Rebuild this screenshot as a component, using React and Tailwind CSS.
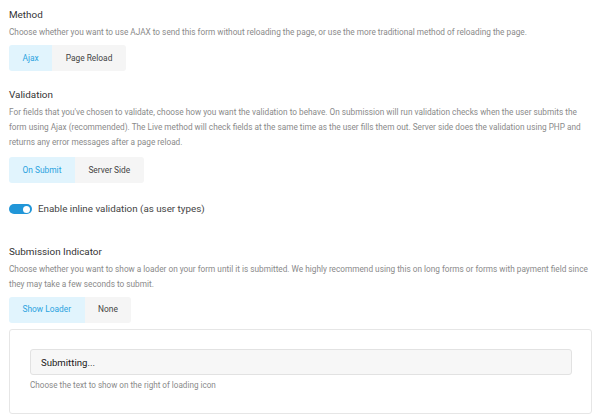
import { useState } from 'react'

function Segmented({ options, value, onChange }) {
  return (
    <div className="flex">
      {options.map((opt, i) => {
        const active = opt === value
        return (
          <button
            key={opt}
            onClick={() => onChange(opt)}
            className={
              'h-[26px] px-[13.5px] text-[8.4px] ' +
              (i === 0 ? 'rounded-l-[3px] ' : '') +
              (i === options.length - 1 ? 'rounded-r-[3px] ' : '') +
              (active ? 'bg-[#e1f4fd] text-[#2ba3df]' : 'bg-[#f5f5f5] text-[#444]')
            }
          >
            {opt}
          </button>
        )
      })}
    </div>
  )
}

function Section({ title, children }) {
  return (
    <div>
      <h3 className="text-[9.9px] leading-[14px] text-[#333]">{title}</h3>
      <div className="mt-[3px] text-[8.25px] leading-[15px] text-[#8a8a8a]">{children}</div>
    </div>
  )
}

export default function App() {
  const [method, setMethod] = useState('Ajax')
  const [validation, setValidation] = useState('On Submit')
  const [inline, setInline] = useState(true)
  const [indicator, setIndicator] = useState('Show Loader')
  const [text, setText] = useState('Submitting...')

  return (
    <div className="w-[600px] h-[418px] bg-white px-[9px] pt-[8px] font-['Roboto',sans-serif] overflow-hidden">
      <Section title="Method">
        Choose whether you want to use AJAX to send this form without reloading the page, or use the more traditional method of reloading the page.
      </Section>
      <div className="mt-[5px]">
        <Segmented options={['Ajax', 'Page Reload']} value={method} onChange={setMethod} />
      </div>

      <div className="mt-[17px]">
        <Section title="Validation">
          For fields that you've chosen to validate, choose how you want the validation to behave. On submission will run validation checks when the user submits the form using Ajax (recommended). The Live method will check fields at the same time as the user fills them out. Server side does the validation using PHP and returns any error messages after a page reload.
        </Section>
      </div>
      <div className="mt-[7px]">
        <Segmented options={['On Submit', 'Server Side']} value={validation} onChange={setValidation} />
      </div>

      <div className="mt-[19px] flex items-center gap-[6px]">
        <button
          onClick={() => setInline(!inline)}
          className={
            'relative w-[23px] h-[10px] rounded-full ' + (inline ? 'bg-[#2196d8]' : 'bg-[#ccc]')
          }
        >
          <span
            className={
              'absolute top-[1.5px] w-[7px] h-[7px] rounded-full bg-white ' +
              (inline ? 'right-[2px]' : 'left-[2px]')
            }
          />
        </button>
        <span className="text-[9.8px] text-[#444]">Enable inline validation (as user types)</span>
      </div>

      <div className="mt-[28px]">
        <Section title="Submission Indicator">
          Choose whether you want to show a loader on your form until it is submitted. We highly recommend using this on long forms or forms with payment field since they may take a few seconds to submit.
        </Section>
      </div>
      <div className="mt-[5px]">
        <Segmented options={['Show Loader', 'None']} value={indicator} onChange={setIndicator} />
      </div>

      <div className="mt-[6px] w-[583px] h-[85px] border border-[#e6e6e6] rounded-[3px] px-[20px] pt-[19px]">
        <input
          value={text}
          onChange={(e) => setText(e.target.value)}
          className="w-[542px] h-[26px] px-[10px] bg-[#f7f7f7] border border-[#e2e2e2] rounded-[3px] text-[9.6px] text-[#1a1a1a] outline-none"
        />
        <p className="mt-[4px] text-[8.15px] text-[#8a8a8a]">Choose the text to show on the right of loading icon</p>
      </div>
    </div>
  )
}
